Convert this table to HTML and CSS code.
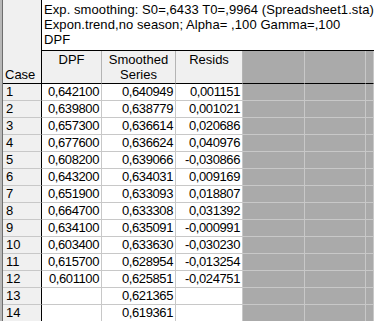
FILE: index.html
```html
<!DOCTYPE html>
<html>
<head>
<meta charset="utf-8">
<link rel="stylesheet" href="styles.css">
</head>
<body>
<div class="frame">
<div class="sheet">
  <div class="corner"><span>Case</span></div>
  <div class="title">Exp. smoothing: S0=,6433 T0=,9964 (Spreadsheet1.sta)<br>Expon.trend,no season; Alpha= ,100 Gamma=,100<br>DPF</div>

  <div class="hd">DPF</div>
  <div class="hd">Smoothed<br>Series</div>
  <div class="hd">Resids</div>
  <div class="ghd"></div><div class="ghd"></div><div class="ghd"></div>

  <div class="rh">1</div><div class="c">0,642100</div><div class="c">0,640949</div><div class="c">0,001151</div><div class="g"></div><div class="g"></div><div class="g"></div>
  <div class="rh">2</div><div class="c">0,639800</div><div class="c">0,638779</div><div class="c">0,001021</div><div class="g"></div><div class="g"></div><div class="g"></div>
  <div class="rh">3</div><div class="c">0,657300</div><div class="c">0,636614</div><div class="c">0,020686</div><div class="g"></div><div class="g"></div><div class="g"></div>
  <div class="rh">4</div><div class="c">0,677600</div><div class="c">0,636624</div><div class="c">0,040976</div><div class="g"></div><div class="g"></div><div class="g"></div>
  <div class="rh">5</div><div class="c">0,608200</div><div class="c">0,639066</div><div class="c">-0,030866</div><div class="g"></div><div class="g"></div><div class="g"></div>
  <div class="rh">6</div><div class="c">0,643200</div><div class="c">0,634031</div><div class="c">0,009169</div><div class="g"></div><div class="g"></div><div class="g"></div>
  <div class="rh">7</div><div class="c">0,651900</div><div class="c">0,633093</div><div class="c">0,018807</div><div class="g"></div><div class="g"></div><div class="g"></div>
  <div class="rh">8</div><div class="c">0,664700</div><div class="c">0,633308</div><div class="c">0,031392</div><div class="g"></div><div class="g"></div><div class="g"></div>
  <div class="rh">9</div><div class="c">0,634100</div><div class="c">0,635091</div><div class="c">-0,000991</div><div class="g"></div><div class="g"></div><div class="g"></div>
  <div class="rh">10</div><div class="c">0,603400</div><div class="c">0,633630</div><div class="c">-0,030230</div><div class="g"></div><div class="g"></div><div class="g"></div>
  <div class="rh">11</div><div class="c">0,615700</div><div class="c">0,628954</div><div class="c">-0,013254</div><div class="g"></div><div class="g"></div><div class="g"></div>
  <div class="rh">12</div><div class="c">0,601100</div><div class="c">0,625851</div><div class="c">-0,024751</div><div class="g"></div><div class="g"></div><div class="g"></div>
  <div class="rh">13</div><div class="c"></div><div class="c">0,621365</div><div class="c"></div><div class="g"></div><div class="g"></div><div class="g"></div>
  <div class="rh">14</div><div class="c"></div><div class="c">0,619361</div><div class="c"></div><div class="g"></div><div class="g"></div><div class="g"></div>
</div>
</div>
</body>
</html>
```

FILE: styles.css
```css
html, body {
  margin: 0;
  padding: 0;
  background: #ffffff;
  overflow: hidden;
}

.frame {
  width: 374px;
  height: 321px;
  box-sizing: border-box;
  border-left: 2px solid #b8b8b8;
  overflow: hidden;
}

.sheet {
  border-left: 1px solid #6e6e6e;
  display: grid;
  grid-template-columns: 39px 60px 74px 67px 62px 61px 1fr;
  grid-template-rows: 51px 33px repeat(14, 17px);
  font-family: "Liberation Sans", Arial, sans-serif;
  font-size: 13px;
  color: #000;
  height: 400px;
}

.sheet > div {
  box-sizing: border-box;
  overflow: hidden;
  white-space: nowrap;
}

.corner {
  grid-column: 1;
  grid-row: 1 / 3;
  background: #f0f0f0;
  border-right: 1px solid #000;
  border-bottom: 1px solid #000;
  display: flex;
  align-items: flex-end;
  padding: 0 0 1px 2px;
  line-height: 15px;
}

.title {
  grid-column: 2 / -1;
  grid-row: 1;
  background: #fff;
  border-bottom: 1px solid #000;
  padding: 2px 0 0 2px;
  line-height: 15px;
  letter-spacing: 0.08px;
}

.hd {
  background: #f0f0f0;
  border-right: 1px solid #b4b4b4;
  border-bottom: 1px solid #000;
  text-align: center;
  line-height: 15px;
  padding-top: 1px;
}

.ghd {
  background: #aaaaaa;
  border-right: 1px solid #c8c8c8;
  border-bottom: 1px solid #000;
}

.rh {
  background: #f0f0f0;
  border-right: 1px solid #000;
  border-bottom: 1px solid #c8c8c8;
  line-height: 16px;
  padding-left: 3px;
}

.c {
  background: #fff;
  border-right: 1px solid #c8c8c8;
  border-bottom: 1px solid #c8c8c8;
  text-align: right;
  line-height: 16px;
  padding-right: 2px;
  letter-spacing: -0.4px;
}

.g {
  background: #aaaaaa;
  border-right: 1px solid #c8c8c8;
  border-bottom: 1px solid #c8c8c8;
}
```
